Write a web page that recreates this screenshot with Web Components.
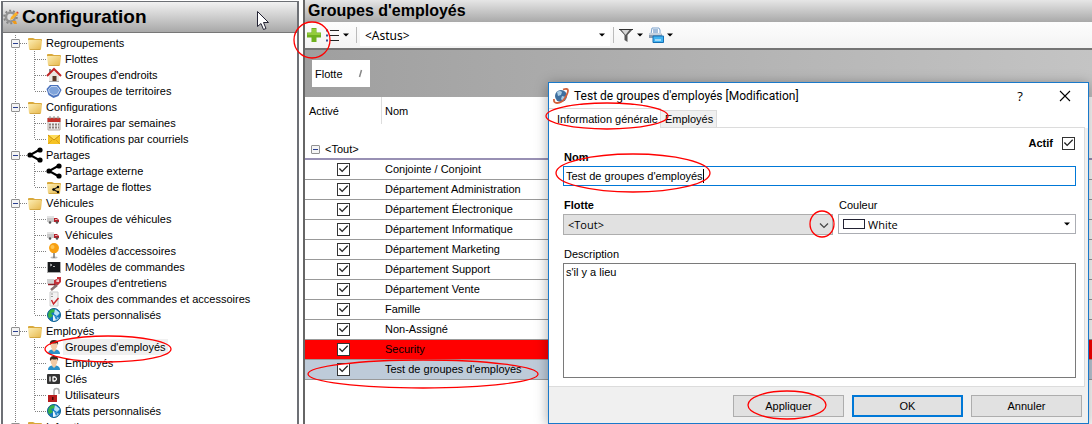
<!DOCTYPE html>
<html lang="fr">
<head>
<meta charset="utf-8">
<title>Configuration</title>
<style>
    html, body { margin: 0; height: 100%; }
    body {
        font: 11px "Liberation Sans", sans-serif;
        color: #000;
        background: #fff;
        overflow: hidden;
        --base: 11px "Liberation Sans", sans-serif;
        --segoe: 11px "Open Sans", "Noto Sans", sans-serif;
        --accent: #0078d7;
    }
</style>
</head>
<body>
<config-app></config-app>

<script>
// 16x16 icons, drawn inline
const folder = '<path d="M1 4q0-1 1-1h4l2 1h6q1 0 1 1v1H1z" fill="#d9a93c"/><path d="M1 5h13l1 1-1 8q0 1-1 1H3q-1 0-1-1z" fill="url(#f)"/><path d="M3 14.5h10" stroke="#c89a35" opacity=".7"/><defs><linearGradient id="f" x2="1" y2="1"><stop stop-color="#fdeeb4"/><stop offset="1" stop-color="#e5b548"/></linearGradient></defs>';
const share = '<path d="M13 2.500 3 8l10 5.500" fill="none" stroke="#000" stroke-width="2"/><circle cx="13" cy="3" r="2.600"/><circle cx="3" cy="8" r="2.600"/><circle cx="13" cy="13" r="2.600"/>';
const truck = '<path d="M1 5h7v6H1z" fill="#c9c9c9"/><path d="M1 5h7v2H1z" fill="#e3e3e3"/><path d="M8 7h3l2 2v2H8z" fill="#b3202a"/><path d="M9 8h2l1 1H9z" fill="#efb3b3"/><circle cx="4" cy="11.500" r="1.300" fill="#555"/><circle cx="11" cy="11.500" r="1.300" fill="#555"/>';
const globe = '<circle cx="8" cy="8" r="6.500" fill="#1678c2"/><path d="M8 1.500a6.500 6.500 0 0 0-5 10L7 9 5 6l4-1z" fill="#36b346"/><path d="M9 2l5 4-3 3-3-2z" fill="#b8e4f7"/><path d="M7 8l6 3a6.500 6.500 0 0 1-6 3z" fill="#e8f4fb"/><path d="M8 8l2 5 2-2z" fill="#2487ce"/><circle cx="8" cy="8" r="6.500" fill="none" stroke="#0c5f8f"/>';
const person = '<path d="M2 15q0-4 4-4.500h4q4 .5 4 4.500z" fill="#2b8fc7"/><path d="M6 9h4v2l-2 2-2-2z" fill="#f1c8a0"/><ellipse cx="8" cy="6" rx="3.400" ry="4.200" fill="#f3caa5"/><path d="M4 6Q3 1 8 1t4 5l-1-2q-3 1-5 0z" fill="#3d2a20"/>';

const icons = {
    folder, share, truck, globe, person,
    gear: '<circle cx="7.500" cy="8" r="4.500" fill="#ddd" stroke="#929292" stroke-width="2.500"/><circle cx="7.500" cy="8" r="6.400" fill="none" stroke="#858585" stroke-width="1.800" stroke-dasharray="2 2"/><path d="M7 11l1-3 5-5 2 2-5 5z" fill="#f9b02a"/><path d="M13 3l2 2 .7-1.300-1.300-1.300z" fill="#e0452f"/><path d="M9 12h4l1 3h-3z" fill="#ef9a1a"/>',
    house: '<path d="M3 8v7h10V8L8 4z" fill="#e9e6e1"/><path d="M3 2h2v3L3 6z" fill="#888"/><path d="M1 9l7-7 7 7" fill="none" stroke="#c02525" stroke-width="2"/><path d="M6.500 9h4v6h-4z" fill="#5c3a28"/><path d="M3 14.500h10" stroke="#aaa"/>',
    hexagon: '<path d="M4 2h8l3.500 5-3 6-5 2-5-3L.5 6z" fill="#4a72bd"/><path d="M5 3.500h6l2.700 3.700-2.300 4-4 1-4-2.200L2.500 6.500z" fill="#7fa3da" stroke="#c5d6f0"/>',
    calendar: '<path d="M2 3h12v12H2z" fill="#eee" stroke="#b5a9a0"/><path d="M1.500 3h13v4h-13z" fill="#c3322c"/><path d="M4 1v3M8 1v3M12 1v3" stroke="#8a8a8a"/><path d="M3 9.500h10M3 12.500h10" stroke="#8c7f7a" stroke-width="2" stroke-dasharray="2 1"/>',
    mail: '<path d="M2 4h12v9H2z" fill="#f6c324"/><path d="M2 4l6 5 6-5" fill="#ffdc58" stroke="#c78d10"/><path d="M2 13l4-4M14 13l-4-4" stroke="#dca41b"/>',
    sharedFolder: folder + '<path d="M12 8L7.500 10.500 12 13" fill="none" stroke="#222" stroke-width="1.200"/><circle cx="12" cy="8" r="1.200"/><circle cx="7.500" cy="10.500" r="1.200"/><circle cx="12" cy="13" r="1.200"/>',
    pin: '<ellipse cx="8" cy="14.500" rx="3.500" ry="1" fill="#bbb"/><path d="M8 9v6" stroke="#777" stroke-width="1.500"/><path d="M3 5a5 5 0 0 1 10 0q0 3-3 5H6Q3 8 3 5z" fill="#f8a012"/><circle cx="6.500" cy="4" r="2" fill="#ffc450"/>',
    terminal: '<path d="M1 3h14v11H1z" fill="#aaa"/><path d="M2 3h12v10H2z" fill="#16181b"/><path d="M4 5l2 1-2 1M7 7.500h2" fill="none" stroke="#ddd" stroke-width=".8"/>',
    service: '<path d="M1 4h7v5H1z" fill="#d0d0d0"/><path d="M8 5l3-1V2h4v5l-3 3H8z" fill="#c3313a"/><path d="M10 6h3M12 4v3" stroke="#fff"/><path d="M2 9.500h6l3 1.500" fill="none" stroke="#8e1d25" stroke-width="1.500"/><path d="M5 15l6-5" stroke="#8a7070" stroke-width="2.500"/>',
    checklist: '<path d="M4 1h8v14H4z" fill="#f2f2f2" stroke="#ccc"/><path d="M5 3h3M5 5.500h3" stroke="#999" stroke-dasharray="2 1"/><path d="M5.500 9l2 4 5-6" fill="none" stroke="#c9252b" stroke-width="1.500"/>',
    badge: '<rect x="1" y="3" width="13" height="10" rx="1" fill="#333"/><path d="M4 5.500v5M7 5.500v5M7 6h2q3 2 0 4H7" fill="none" stroke="#fff" stroke-width="1.300"/>',
    lock: '<path d="M8 8V4q0-2.500 2.500-2.500T13 4v3" fill="none" stroke="#aaa" stroke-width="1.500"/><rect x="2" y="8" width="9" height="7" fill="#b81d1d"/><path d="M6 10h1.500v3H6z" fill="#4d0808"/>',
    plus: '<path d="M5.500 1h5v4.500H15v5h-4.500V15h-5v-4.500H1v-5h4.500z" fill="#6fb01f"/><path d="M6 2h4v4h4.500v2h-13V6H6z" fill="#93cc3c"/>',
    list: '<path d="M6 3.500h9M6 8.500h9M6 13.500h9" stroke="#222" stroke-width="1"/><path d="M2 3.500h2M2 8.500h2M2 13.500h2" stroke="#3c4f94" stroke-width="2"/>',
    funnel: '<path d="M1 2h14L9.500 8v7l-3-2V8z" fill="#555"/><path d="M3.500 3h8L7.500 8z" fill="#d4d4d4"/><path d="M1 2.500h14" stroke="#333"/>',
    printer: '<path d="M4 1h7l1 2v4H3z" fill="#fff" stroke="#7aa1cc"/><path d="M5 3h5M5 5h5" stroke="#4a7eb9"/><path d="M1 6h12l1 2v3H1z" fill="#8d9cae"/><path d="M1 6h12v2H1z" fill="#c7d2df"/><path d="M5 9h10.500v6.500H5z" fill="#42b3f0" stroke="#1570b5"/><path d="M7 13h6" stroke="#fff"/>',
    app: '<circle cx="8" cy="8" r="6" fill="#3f6f9f"/><path d="M4 4q3-2 5 0L8 7 5 8zM9 8l4 1-3 4-2-2z" fill="#a9cde6"/><path d="M10 1.500q5-1.500 5 1T12 10 4 15Q.5 15 1 11" fill="none" stroke="#d2603a" stroke-width="1.800"/>',
    close: '<path d="M3 3l10 10M13 3L3 13" stroke="#000" stroke-width="1.100"/>',
    chevron: '<path d="M4 6.500l4 4 4-4" fill="none" stroke="#444" stroke-width="1.200"/>',
    arrow: '<path d="M5 6.500h6l-3 3z"/>',
    sort: '<path d="M9.500 4L7.500 11" stroke="#888" stroke-width="1.500"/>'
};

// Base class: every component fills its shadow root with render()
class BaseElement extends HTMLElement {
    connectedCallback() {
        if (!this.shadowRoot) {
            this.attachShadow({ mode: 'open' });
        }
        this.shadowRoot.innerHTML = this.render();
    }

    attr(name) {
        return (this.getAttribute(name) || '').replace(/</g, '&lt;').replace(/"/g, '&quot;');
    }
}

class UiIcon extends BaseElement {
    render() {
        return `
            <style>
                :host { display: inline-block; width: 16px; height: 16px; flex: none; }
                svg { display: block; width: 100%; height: 100%; }
            </style>
            <svg viewBox="0 0 16 16" aria-hidden="true">${icons[this.getAttribute('name')]}</svg>
        `;
    }
}

// Square - box in front of an open group
class ExpandBox extends BaseElement {
    render() {
        return `
            <style>
                :host { display: block; flex: none; width: 9px; height: 9px; }
                button {
                    box-sizing: border-box; display: block; width: 9px; height: 9px;
                    padding: 0; border: 1px solid #919191; border-radius: 1px;
                    background: linear-gradient(#2a3f8f, #2a3f8f) center / 5px 1px no-repeat, #f4f4f4;
                }
            </style>
            <button aria-label="Réduire"></button>
        `;
    }
}

const checkboxStyles = `
    input[type=checkbox] {
        appearance: none; box-sizing: border-box; flex: none;
        width: 13px; height: 13px; margin: 0;
        border: 1px solid #333; background: #fff; display: grid;
    }
    input[type=checkbox]:checked::before {
        content: ""; width: 11px; height: 11px; background: #222;
        clip-path: polygon(8% 50%, 17% 42%, 38% 64%, 84% 16%, 92% 25%, 38% 80%);
    }
`;

class TreeItem extends BaseElement {
    render() {
        const child = this.hasAttribute('child');
        return `
            <style>
                :host {
                    --dots-v: repeating-linear-gradient(#808080 0 1px, transparent 1px 2px);
                    --dots-h: repeating-linear-gradient(90deg, #808080 0 1px, transparent 1px 2px);
                    display: flex; align-items: center; height: 16px;
                    font: var(--base); white-space: nowrap;
                }
                .trunk {
                    display: flex; align-items: center; width: 9px; height: 16px; margin-left: 8px;
                    background: var(--dots-v) 4px 0 / 1px 100% no-repeat;
                }
                .stub { width: 7px; height: 1px; background: var(--dots-h); }
                .branch {
                    width: 19px; height: 16px; margin-left: 7px;
                    background: var(--dots-v) 7px 0 / 1px 100% no-repeat,
                                var(--dots-h) 8px 8px / 11px 1px no-repeat;
                }
                :host([last]) .branch {
                    background: var(--dots-v) 7px 0 / 1px 8px no-repeat,
                                var(--dots-h) 8px 8px / 11px 1px no-repeat;
                }
                a { color: inherit; text-decoration: none; line-height: 16px; padding: 0 2px; margin-left: 1px; }
                :host([selected]) a { background: #f0f0f0; }
            </style>
            <span class="trunk">${child ? '' : '<expand-box></expand-box>'}</span>
            <span class="${child ? 'branch' : 'stub'}"></span>
            <ui-icon name="${this.attr('icon')}"></ui-icon>
            <a href="#"><slot></slot></a>
        `;
    }
}

class SidePanel extends BaseElement {
    render() {
        return `
            <style>
                :host {
                    display: flex; flex-direction: column; overflow: hidden;
                    margin: 1px 0 0 1px; border: 2px solid #6d7075; border-width: 1px 2px 0;
                }
                header {
                    display: flex; align-items: center; gap: 3px; height: 30px; flex: none;
                    background: linear-gradient(#f2f2f2, #a8a8a8); border-bottom: 1px solid #777;
                }
                h1 { margin: 0; font: bold 19px "Liberation Sans", sans-serif; }
                nav { padding-top: 2px; }
            </style>
            <header><ui-icon name="gear"></ui-icon><h1>${this.attr('heading')}</h1></header>
            <nav><slot></slot></nav>
        `;
    }
}

class ToolBar extends BaseElement {
    render() {
        return `
            <style>
                :host {
                    display: flex; align-items: center; height: 26px; flex: none;
                    background: linear-gradient(#fdfdfd, #f3f3f3); border-bottom: 2px solid #747474;
                }
                button { display: flex; align-items: center; padding: 0 1px; border: 0; background: none; }
                button ui-icon + ui-icon { margin: 0 -2px; }
                .separator { width: 1px; height: 16px; margin: 0 3px; background: #bbb; }
                .picker { display: grid; align-items: center; width: 250px; }
                .picker > * { grid-area: 1 / 1; }
                .picker ui-icon { justify-self: end; pointer-events: none; }
                select {
                    appearance: none; height: 22px; padding: 0 5px; border: 0; background: #fff;
                    font: 12px "Noto Sans", sans-serif; color: #000;
                }
            </style>
            <button aria-label="Ajouter"><ui-icon name="plus"></ui-icon></button>
            <button aria-label="Liste"><ui-icon name="list"></ui-icon><ui-icon name="arrow"></ui-icon></button>
            <span class="separator"></span>
            <span class="picker">
                <select aria-label="Client"><option>&lt;Astus&gt;</option></select>
                <ui-icon name="arrow"></ui-icon>
            </span>
            <span class="separator"></span>
            <button aria-label="Filtrer"><ui-icon name="funnel"></ui-icon><ui-icon name="arrow"></ui-icon></button>
            <button aria-label="Imprimer"><ui-icon name="printer"></ui-icon><ui-icon name="arrow"></ui-icon></button>
        `;
    }
}

const groups = [
    { name: 'Conjointe / Conjoint' },
    { name: 'Département Administration' },
    { name: 'Département Électronique' },
    { name: 'Département Informatique' },
    { name: 'Département Marketing' },
    { name: 'Département Support' },
    { name: 'Département Vente' },
    { name: 'Famille' },
    { name: 'Non-Assigné' },
    { name: 'Security', state: 'alert' },
    { name: "Test de groupes d'employés", state: 'selected' }
];

class DataGrid extends BaseElement {
    render() {
        const rows = groups.map(group => `
            <tr class="${group.state || ''}">
                <td class="check"><input type="checkbox" aria-label="${group.name}" checked></td>
                <td>${group.name}</td>
            </tr>
        `).join('');

        return `
            <style>
                :host { display: block; }
                ${checkboxStyles}
                .group-bar { padding: 10px 7px; background: linear-gradient(90deg, #9f9f9f, #c4c4c4); }
                .chip {
                    display: flex; align-items: center; justify-content: space-between;
                    box-sizing: border-box; width: 58px; height: 27px; padding: 0 2px 0 3px; background: #fff;
                }
                table { width: 100%; border-collapse: separate; border-spacing: 0; table-layout: fixed; }
                col:first-child { width: 77px; }
                th { height: 27px; padding: 0 3px; font-weight: normal; text-align: left; }
                th:first-child { padding: 0 4px; border-right: 1px solid #ddd; }
                .group td { height: 18px; padding: 16px 6px 0; border-bottom: 2px solid #9890b4; }
                .group div { display: flex; align-items: center; gap: 5px; }
                tbody td { height: 18px; padding: 0 3px 1px; border-bottom: 1px solid #999; }
                .check input { margin: 0 auto; }
                .alert td { background: #f00; }
                .selected td { background: #becbd9; }
            </style>
            <div class="group-bar"><div class="chip">Flotte<ui-icon name="sort"></ui-icon></div></div>
            <table>
                <colgroup><col><col></colgroup>
                <thead><tr><th>Activé</th><th>Nom</th></tr></thead>
                <tbody>
                    <tr class="group"><td colspan="2"><div><expand-box></expand-box>&lt;Tout&gt;</div></td></tr>
                    ${rows}
                </tbody>
            </table>
        `;
    }
}

class MainPanel extends BaseElement {
    render() {
        return `
            <style>
                :host { display: flex; flex-direction: column; overflow: hidden; border-left: 2px solid #666; }
                h2 {
                    margin: 0; padding-left: 3px; flex: none;
                    font: bold 16px/22px "Liberation Sans", sans-serif;
                    background: linear-gradient(#e6e6e6, #a9a9a9);
                }
            </style>
            <h2>${this.attr('heading')}</h2>
            <slot></slot>
        `;
    }
}

// One labelled control of the form; kind is text, select, color, area or check
class FormField extends BaseElement {
    control() {
        const value = this.attr('value');
        switch (this.getAttribute('kind')) {
            case 'text':
                return `<input id="field" type="text" value="${value}">`;
            case 'area':
                return `<textarea id="field">${value}</textarea>`;
            case 'check':
                return '<input id="field" type="checkbox" checked>';
            case 'color':
                return `<span class="stack color"><select id="field"><option>${value}</option></select><i></i><ui-icon name="arrow"></ui-icon></span>`;
            default:
                return `<span class="stack"><select id="field"><option>${value}</option></select><ui-icon name="chevron"></ui-icon></span>`;
        }
    }

    render() {
        return `
            <style>
                :host { display: flex; flex-direction: column; gap: 2px; }
                :host([kind=check]) { flex-direction: row; justify-content: flex-end; align-items: center; gap: 9px; margin-right: 1px; }
                ${checkboxStyles}
                label { padding-left: 1px; font: var(--base); line-height: 14px; }
                :host([strong]) label { font-weight: bold; }
                input[type=text], textarea, select {
                    box-sizing: border-box; width: 100%; margin: 0; border-radius: 0;
                    outline: 0; font: var(--base); color: #000;
                }
                input[type=text] {
                    height: 20px; padding: 0 2px; border: 1px solid var(--accent);
                    background: linear-gradient(#000, #000) 139px center / 1px 14px no-repeat #fff;
                }
                textarea { display: block; height: 115px; padding: 2px; border: 1px solid #7a7a7a; resize: none; }
                select { appearance: none; height: 21px; padding: 0 4px; border: 1px solid #adadad; background: #e1e1e1; font: var(--segoe); }
                .color select { height: 20px; padding-left: 29px; border-color: #abadb3; background: #fff; }
                .stack { display: grid; align-items: center; }
                .stack > * { grid-area: 1 / 1; }
                .stack ui-icon { justify-self: end; margin-right: 1px; pointer-events: none; }
                i { width: 20px; height: 8px; margin-left: 5px; border: 1px solid #223; background: #fff; }
            </style>
            <label for="field">${this.attr('label')}</label>
            ${this.control()}
        `;
    }
}

class PushButton extends BaseElement {
    render() {
        return `
            <style>
                :host { display: block; width: 111px; }
                button {
                    box-sizing: border-box; width: 100%; height: 22px; padding: 0;
                    border: 1px solid #adadad; background: #e1e1e1; color: #000; font: var(--base);
                }
                :host([default]) button { border: 2px solid var(--accent); }
            </style>
            <button><slot></slot></button>
        `;
    }
}

class AppDialog extends BaseElement {
    render() {
        return `
            <style>
                :host {
                    display: block; box-sizing: border-box; width: 541px;
                    border: 1px solid #1979ca; background: #fff;
                    box-shadow: 0 2px 12px rgba(0, 0, 0, .35);
                }
                header { display: flex; align-items: center; height: 25px; padding: 0 15px 0 4px; gap: 5px; }
                h3 { flex: 1; margin: 0; font: 12px Roboto, sans-serif; white-space: nowrap; }
                header button { width: 16px; height: 16px; padding: 0; border: 0; background: none; font: 13px "Open Sans", sans-serif; line-height: 16px; }
                header button + button { margin-left: 24px; }
                .tabs { display: flex; align-items: flex-end; height: 20px; margin-right: 3px; }
                .tabs::after { content: ""; flex: 1; align-self: stretch; border-bottom: 1px solid #dcdcdc; }
                .tabs button {
                    box-sizing: border-box; height: 18px; padding: 0 3px 0 4px; font: var(--base); white-space: nowrap;
                    border: 1px solid #dcdcdc; border-left: 0; background: #f0f0f0; color: #000;
                }
                .tabs .active { height: 20px; padding: 0 2px 0 8px; border-bottom: 0; background: #fff; }
                .page { background: #f0f0f0; padding-right: 3px; }
                .content { padding: 8px 8px 8px 14px; background: #fff; border: 1px solid #dcdcdc; border-width: 0 1px 1px 0; }
                footer { display: flex; justify-content: flex-end; gap: 8px; padding: 8px 6px 6px; background: #f0f0f0; }
            </style>
            <header>
                <ui-icon name="app"></ui-icon>
                <h3>${this.attr('heading')}</h3>
                <button aria-label="Aide">?</button>
                <button aria-label="Fermer"><ui-icon name="close"></ui-icon></button>
            </header>
            <div class="tabs" role="tablist">
                <button class="active" role="tab" aria-selected="true">Information générale</button>
                <button role="tab">Employés</button>
            </div>
            <div class="page"><div class="content"><slot></slot></div></div>
            <footer><slot name="footer"></slot></footer>
        `;
    }
}

// Red ellipses and mouse pointer drawn over the screen
class MarkLayer extends BaseElement {
    render() {
        const marks = [
            [312, 40, 18, 18],
            [108, 349, 63, 13],
            [423, 374, 115, 14],
            [607, 116, 61, 13],
            [633, 173, 77, 19],
            [822, 224, 12, 13],
            [787, 405, 39, 14]
        ];
        const ellipses = marks.map(([cx, cy, rx, ry]) =>
            `<ellipse cx="${cx}" cy="${cy}" rx="${rx}" ry="${ry}"/>`).join('');

        return `
            <style>
                :host { position: absolute; top: 0; left: 0; pointer-events: none; }
                svg { display: block; }
            </style>
            <svg width="1092" height="424" aria-hidden="true">
                <g fill="none" stroke="#f00" stroke-width="1.300">${ellipses}</g>
                <path d="M257.500 11.500v15l3.500-3 2.500 6 2.500-1-2.500-6h5z" fill="#fff" stroke="#223"/>
            </svg>
        `;
    }
}

class ConfigApp extends BaseElement {
    render() {
        return `
            <style>
                :host {
                    display: grid; grid-template-columns: 299px 1fr; column-gap: 4px;
                    position: relative; height: 100vh; overflow: hidden;
                }
                app-dialog { position: absolute; top: 82px; right: 3px; }
                .row { display: grid; grid-template-columns: 270px 1fr; column-gap: 5px; margin: 12px 0; }
            </style>
            <side-panel heading="Configuration">
                <tree-item icon="folder">Regroupements</tree-item>
                <tree-item child icon="folder">Flottes</tree-item>
                <tree-item child icon="house">Groupes d'endroits</tree-item>
                <tree-item child last icon="hexagon">Groupes de territoires</tree-item>
                <tree-item icon="folder">Configurations</tree-item>
                <tree-item child icon="calendar">Horaires par semaines</tree-item>
                <tree-item child last icon="mail">Notifications par courriels</tree-item>
                <tree-item icon="share">Partages</tree-item>
                <tree-item child icon="share">Partage externe</tree-item>
                <tree-item child last icon="sharedFolder">Partage de flottes</tree-item>
                <tree-item icon="folder">Véhicules</tree-item>
                <tree-item child icon="truck">Groupes de véhicules</tree-item>
                <tree-item child icon="truck">Véhicules</tree-item>
                <tree-item child icon="pin">Modèles d'accessoires</tree-item>
                <tree-item child icon="terminal">Modèles de commandes</tree-item>
                <tree-item child icon="service">Groupes d'entretiens</tree-item>
                <tree-item child icon="checklist">Choix des commandes et accessoires</tree-item>
                <tree-item child last icon="globe">États personnalisés</tree-item>
                <tree-item icon="folder">Employés</tree-item>
                <tree-item child selected icon="person">Groupes d'employés</tree-item>
                <tree-item child icon="person">Employés</tree-item>
                <tree-item child icon="badge">Clés</tree-item>
                <tree-item child icon="lock">Utilisateurs</tree-item>
                <tree-item child last icon="globe">États personnalisés</tree-item>
                <tree-item icon="folder">Infractions</tree-item>
            </side-panel>

            <main-panel heading="Groupes d'employés">
                <tool-bar></tool-bar>
                <data-grid></data-grid>
            </main-panel>

            <app-dialog heading="Test de groupes d'employés [Modification]">
                <form-field kind="check" strong label="Actif"></form-field>
                <form-field kind="text" strong label="Nom" value="Test de groupes d'employés"></form-field>
                <div class="row">
                    <form-field kind="select" strong label="Flotte" value="<Tout>"></form-field>
                    <form-field kind="color" label="Couleur" value="White"></form-field>
                </div>
                <form-field kind="area" label="Description" value="s'il y a lieu"></form-field>
                <push-button slot="footer">Appliquer</push-button>
                <push-button slot="footer" default>OK</push-button>
                <push-button slot="footer">Annuler</push-button>
            </app-dialog>
            <mark-layer></mark-layer>
        `;
    }
}

customElements.define('ui-icon', UiIcon);
customElements.define('expand-box', ExpandBox);
customElements.define('tree-item', TreeItem);
customElements.define('side-panel', SidePanel);
customElements.define('tool-bar', ToolBar);
customElements.define('data-grid', DataGrid);
customElements.define('main-panel', MainPanel);
customElements.define('form-field', FormField);
customElements.define('push-button', PushButton);
customElements.define('app-dialog', AppDialog);
customElements.define('mark-layer', MarkLayer);
customElements.define('config-app', ConfigApp);
</script>
</body>
</html>
